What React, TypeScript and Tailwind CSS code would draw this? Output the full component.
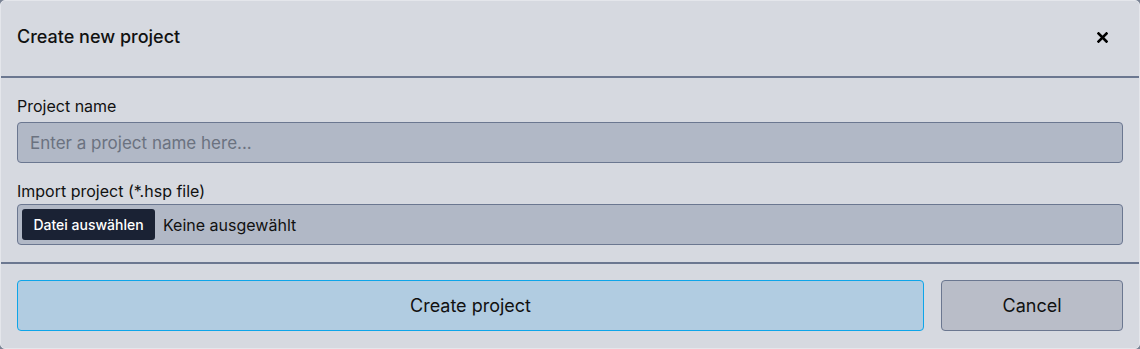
export default function App() {
  return (
    <div className="h-[349px] w-[1140px] bg-[#7a8394] font-['Inter','Liberation_Sans',sans-serif] text-[#111827]">
      <div className="flex h-full w-full flex-col overflow-hidden rounded-[5px] border border-[#e4e6eb] bg-[#d6d9e0]">
        {/* header */}
        <div className="flex h-[77px] shrink-0 items-center justify-between border-b-2 border-[#6b7790] px-4 pb-[3px]">
          <h2 className="text-[18px] font-medium leading-[24px] text-[#111]">Create new project</h2>
          <button className="mr-[13px] flex h-4 w-4 items-center justify-center text-black">
            <svg width="11" height="11" viewBox="0 0 11 11" fill="none">
              <path d="M1.5 1.5L9.5 9.5M9.5 1.5L1.5 9.5" stroke="currentColor" strokeWidth="2.6" strokeLinecap="square" />
            </svg>
          </button>
        </div>

        {/* body */}
        <div className="flex flex-col border-b-2 border-[#6b7790] px-4 pb-[17px] pt-[18px]">
          <label className="mb-[6px] text-[16px] leading-[20px] text-[#111]">Project name</label>
          <input
            className="h-[41px] w-full rounded-[4px] border border-[#6b7790] bg-[#b1b8c6] px-[12px] text-[17px] text-[#111] outline-none placeholder:text-[#6b7280]"
            placeholder="Enter a project name here..."
          />
          <label className="mb-[3px] mt-[18px] text-[16px] leading-[20px] text-[#111]">Import project (*.hsp file)</label>
          <div className="flex h-[41px] w-full items-center gap-2 rounded-[4px] border border-[#6b7790] bg-[#b1b8c6] px-[4px]">
            <span className="flex h-[31px] w-[133px] items-center justify-center rounded-[3px] bg-[#1a2234] text-[14px] font-medium text-white">
              Datei auswählen
            </span>
            <span className="text-[16px] text-[#111]">Keine ausgewählt</span>
          </div>
        </div>

        {/* footer */}
        <div className="flex gap-[17px] px-4 pt-4">
          <button className="h-[51px] flex-1 rounded-[4px] border border-[#0ea5e9] bg-[#b1cce1] text-[18px] text-[#111]">
            Create project
          </button>
          <button className="h-[51px] w-[182px] rounded-[4px] border border-[#6b7790] bg-[#b9bdc8] text-[18px] text-[#111]">
            Cancel
          </button>
        </div>
      </div>
    </div>
  );
}
